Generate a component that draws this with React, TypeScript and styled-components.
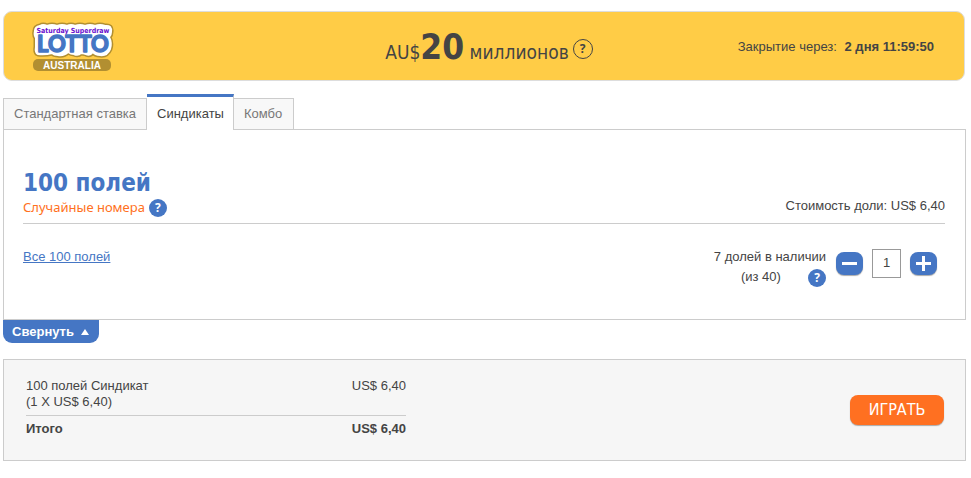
import React, { useState } from "react";
import styled, { createGlobalStyle } from "styled-components";

const colors = {
  blue: "#4576c4",
  orange: "#ff7021",
  yellow: "#ffcc46",
  line: "#cccccc",
  text: "#444444",
};

const display = '"DejaVu Sans Condensed", Tahoma, sans-serif';

const GlobalStyle = createGlobalStyle`
  *, *::before, *::after { box-sizing: border-box; }
  body {
    margin: 0;
    background: #ffffff;
    color: ${colors.text};
    font: 13px/16px "Liberation Sans", Arial, sans-serif;
  }
  button, input { font: inherit; color: inherit; margin: 0; }
  button { border: 0; padding: 0; cursor: pointer; }
`;

const Page = styled.main`
  padding: 11px 5px 16px 3px;
`;

const Banner = styled.header`
  display: grid;
  grid-template-columns: 1fr auto 1fr;
  align-items: center;
  height: 70px;
  margin-right: 1px;
  padding: 0 30px 0 28px;
  background: ${colors.yellow};
  border: 1px solid #dddddd;
  border-radius: 9px;
`;

const Logo = styled.svg`
  display: block;
  width: 84px;
  height: 50px;
`;

const Jackpot = styled.div`
  display: flex;
  align-items: center;
  gap: 4px;
  padding-left: 12px;
`;

const JackpotText = styled.p`
  margin: 0;
  padding-top: 6px;
  font: 19px/40px ${display};
  white-space: nowrap;
  strong {
    font-size: 35px;
  }
`;

const Closing = styled.p`
  margin: 0;
  padding-top: 1px;
  justify-self: end;
  white-space: nowrap;
  strong { margin-left: 4px; }
`;

const HelpButton = styled.button<{ $outline?: boolean }>`
  flex: none;
  width: ${(p) => (p.$outline ? 20 : 18)}px;
  height: ${(p) => (p.$outline ? 20 : 18)}px;
  margin-top: ${(p) => (p.$outline ? 6 : 0)}px;
  border: ${(p) => (p.$outline ? "1px solid #444444" : "0")};
  border-radius: 50%;
  background: ${(p) => (p.$outline ? "transparent" : colors.blue)};
  color: ${(p) => (p.$outline ? colors.text : "#ffffff")};
  font: bold 12px/18px "Noto Sans", sans-serif;
  text-align: center;
`;

const Tabs = styled.div`
  display: flex;
  align-items: flex-end;
  margin-top: 13px;
`;

const Tab = styled.button<{ $active: boolean }>`
  height: ${(p) => (p.$active ? 36 : 32)}px;
  padding: ${(p) => (p.$active ? "1px 9px 0 10px" : "0 10px")};
  margin-bottom: -1px;
  border: 1px solid ${colors.line};
  border-width: ${(p) => (p.$active ? "3px 1px 0 0" : "1px")};
  border-top-color: ${(p) => (p.$active ? colors.blue : colors.line)};
  background: ${(p) => (p.$active ? "#ffffff" : "#f8f8f8")};
  color: ${(p) => (p.$active ? colors.text : "#777777")};
  position: relative;
  & + & { border-left-width: 0; }
  &:last-child { padding-right: 11px; }
`;

const Panel = styled.section`
  padding: 38px 20px 32px 19px;
  border: 1px solid ${colors.line};
`;

const PanelHead = styled.div`
  display: flex;
  justify-content: space-between;
  align-items: flex-end;
  padding-bottom: 6px;
  border-bottom: 1px solid ${colors.line};
`;

const Title = styled.h1`
  margin: 0;
  color: ${colors.blue};
  font: bold 24px/30px ${display};
`;

const Subtitle = styled.div`
  display: flex;
  align-items: center;
  gap: 4px;
  color: ${colors.orange};
  font: 13px/19px "Noto Sans", sans-serif;
`;

const SharePrice = styled.p`
  margin: 0 0 3px;
`;

const PanelBody = styled.div`
  display: flex;
  justify-content: space-between;
  align-items: flex-start;
  padding: 23px 8px 0 0;
`;

const FieldsLink = styled.a`
  margin-top: 2px;
  color: ${colors.blue};
`;

const Shares = styled.div`
  display: flex;
  align-items: flex-start;
  gap: 9px;
`;

const Available = styled.div`
  display: grid;
  grid-template-columns: 1fr auto;
  line-height: 20px;
  margin-right: 1px;
  text-align: center;
  ${HelpButton} { margin-top: 2px; }
`;

const AvailableLine = styled.span`
  grid-column: 1 / -1;
`;

const StepButton = styled.button`
  display: grid;
  place-items: center;
  width: 27px;
  height: 23px;
  margin-top: 5px;
  border-radius: 8px;
  background: ${colors.blue};
  box-shadow: 0 1px 1px #aaaaaa;
`;

const Quantity = styled.input`
  width: 29px;
  height: 29px;
  margin-top: 2px;
  padding: 0 0 2px;
  border: 1px solid #999999;
  border-radius: 0;
  background: #ffffff;
  text-align: center;
`;

const Collapse = styled.button`
  display: flex;
  align-items: center;
  gap: 7px;
  height: 23px;
  padding: 0 10px 0 9px;
  border-radius: 0 0 9px 9px;
  background: ${colors.blue};
  color: #ffffff;
  font-weight: bold;
`;

const Summary = styled.section`
  display: flex;
  justify-content: space-between;
  align-items: flex-start;
  min-height: 102px;
  margin-top: 16px;
  padding: 18px 21px 18px 22px;
  border: 1px solid ${colors.line};
  background: #f6f6f6;
`;

const Totals = styled.table`
  width: 380px;
  border-collapse: collapse;
  text-align: left;
  th, td { padding: 0 0 5px; vertical-align: top; font-weight: normal; }
  td { text-align: right; }
  tfoot th, tfoot td {
    padding: 5px 0 0;
    border-top: 1px solid ${colors.line};
    font-weight: bold;
  }
`;

const PlayButton = styled.button`
  width: 94px;
  height: 30px;
  margin-top: 17px;
  border-radius: 8px;
  background: ${colors.orange};
  box-shadow: 0 1px 1px #aaaaaa;
  color: #ffffff;
  font: 16px/30px ${display};
`;

function LottoLogo() {
  const backing =
    "M8 5Q11 3 15 5Q20 3 25 5Q30 3 35 5Q39 3 43 5Q48 3 53 5Q58 3 63 5Q68 3 73 5Q80 4 79 11Q79 14 77 16Q80 22 78 28Q75 35 68 34Q63 34 61 31Q58 35 54 33Q51 32 49 32Q46 35 42 33Q39 33 36 31Q32 35 26 34Q22 34 20 32Q13 34 6 33Q3 32 4 26V17Q2 14 3 10Q3 6 8 5Z";
  return (
    <Logo viewBox="0 0 84 50" role="img" aria-label="Saturday Superdraw Lotto Australia">
      <path d={backing} fill="#b28f31" stroke="#b28f31" strokeWidth="5" strokeLinejoin="round" />
      <path d={backing} fill="#ffffff" stroke="#ffffff" strokeWidth="2" strokeLinejoin="round" />
      <text
        x="41"
        y="12"
        textAnchor="middle"
        fill="#6a10cf"
        fontFamily="DejaVu Sans Condensed"
        fontWeight="700"
        fontSize="7"
      >
        Saturday Superdraw
      </text>
      <text
        x="41"
        y="31"
        textAnchor="middle"
        fill={colors.blue}
        stroke={colors.blue}
        strokeWidth="1.5"
        strokeLinejoin="round"
        fontFamily="Lato"
        fontWeight="700"
        fontSize="22"
      >
        LOTTO
      </text>
      <rect x="1" y="38" width="78" height="12" rx="5" fill="#b28f31" />
      <text x="40" y="48" textAnchor="middle" fill="#ffffff" fontFamily="Liberation Sans" fontWeight="700" fontSize="10">
        AUSTRALIA
      </text>
    </Logo>
  );
}

const tabNames = ["Стандартная ставка", "Синдикаты", "Комбо"];

export default function App() {
  const [tab, setTab] = useState(1);
  const [count, setCount] = useState(1);
  const total = `US$ ${(count * 6.4).toFixed(2).replace(".", ",")}`;

  return (
    <Page>
      <GlobalStyle />
      <Banner>
        <LottoLogo />
        <Jackpot>
          <JackpotText>
            AU$<strong>20</strong> миллионов
          </JackpotText>
          <HelpButton $outline aria-label="О джекпоте">?</HelpButton>
        </Jackpot>
        <Closing>
          Закрытие через: <strong>2 дня 11:59:50</strong>
        </Closing>
      </Banner>

      <Tabs role="tablist">
        {tabNames.map((name, i) => (
          <Tab key={name} role="tab" aria-selected={tab === i} $active={tab === i} onClick={() => setTab(i)}>
            {name}
          </Tab>
        ))}
      </Tabs>

      <Panel>
        <PanelHead>
          <div>
            <Title>100 полей</Title>
            <Subtitle>
              Случайные номера
              <HelpButton aria-label="О случайных номерах">?</HelpButton>
            </Subtitle>
          </div>
          <SharePrice>Стоимость доли: US$ 6,40</SharePrice>
        </PanelHead>
        <PanelBody>
          <FieldsLink href="#fields">Все 100 полей</FieldsLink>
          <Shares>
            <Available>
              <AvailableLine>7 долей в наличии</AvailableLine>
              <span>(из 40)</span>
              <HelpButton aria-label="О долях">?</HelpButton>
            </Available>
            <StepButton aria-label="Меньше" onClick={() => setCount(Math.max(1, count - 1))}>
              <svg width="15" height="15" viewBox="0 0 15 15">
                <path d="M0 7.5H15" stroke="#fff" strokeWidth="3" />
              </svg>
            </StepButton>
            <Quantity
              aria-label="Количество долей"
              value={count}
              onChange={(e) => setCount(Math.min(7, Math.max(1, Number(e.target.value) || 1)))}
            />
            <StepButton aria-label="Больше" onClick={() => setCount(Math.min(7, count + 1))}>
              <svg width="15" height="15" viewBox="0 0 15 15">
                <path d="M0 7.5H15M7.5 0V15" stroke="#fff" strokeWidth="3" />
              </svg>
            </StepButton>
          </Shares>
        </PanelBody>
      </Panel>

      <Collapse>
        Свернуть
        <svg width="8" height="6" viewBox="0 0 8 6">
          <path d="M4 0L8 6H0Z" fill="#fff" />
        </svg>
      </Collapse>

      <Summary>
        <Totals>
          <tbody>
            <tr>
              <th scope="row">
                100 полей Синдикат
                <br />({count} X US$ 6,40)
              </th>
              <td>{total}</td>
            </tr>
          </tbody>
          <tfoot>
            <tr>
              <th scope="row">Итого</th>
              <td>{total}</td>
            </tr>
          </tfoot>
        </Totals>
        <PlayButton>ИГРАТЬ</PlayButton>
      </Summary>
    </Page>
  );
}
